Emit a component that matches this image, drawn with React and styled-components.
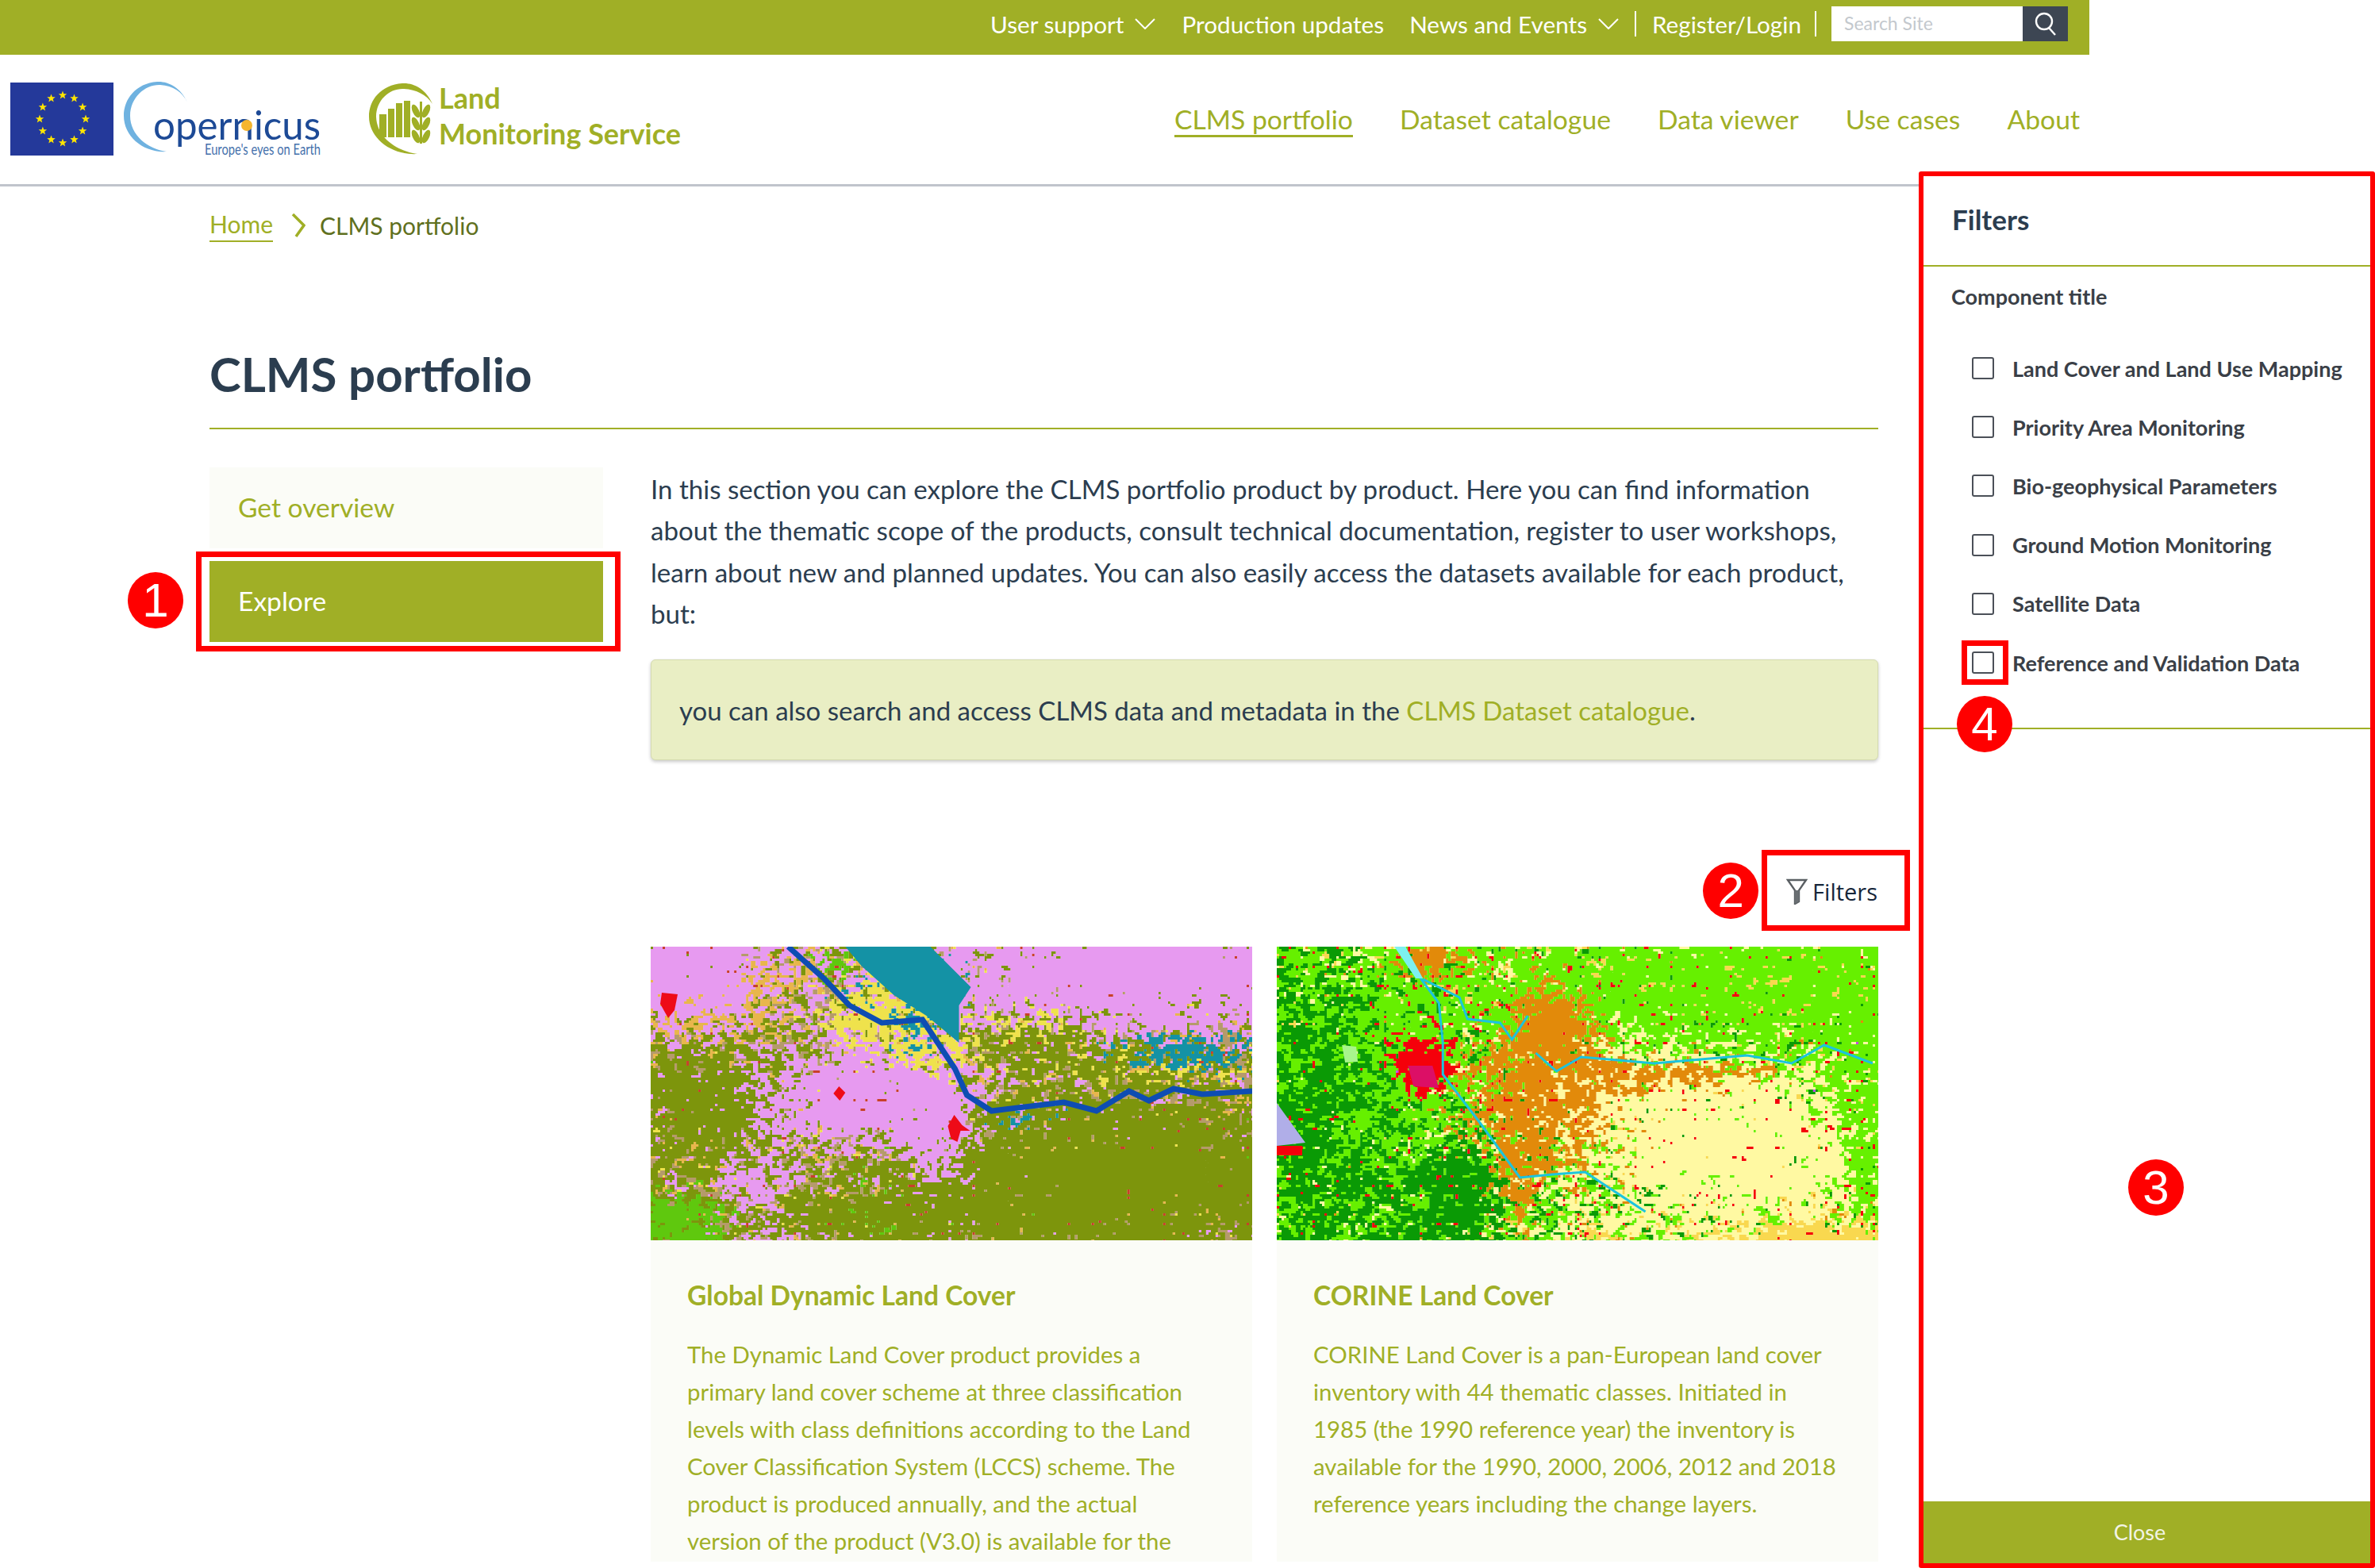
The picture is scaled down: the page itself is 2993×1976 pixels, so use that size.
import React, { useMemo } from "react";
import styled, { createGlobalStyle } from "styled-components";

const GREEN = "#a0af26";
const INK = "#2b3d4f";
const TINT = "#fbfcf7";

const GlobalStyle = createGlobalStyle`
  html, body {
    margin: 0;
    background: #fff;
    font-family: Lato, "Open Sans", sans-serif;
  }
  * { box-sizing: border-box; }
`;

const Page = styled.div`
  position: relative;
  width: 2993px;
  height: 1976px;
  overflow: hidden;
  background: #fff;
`;

const Site = styled.div`
  width: 2633px;
`;

const TopBar = styled.div`
  display: flex;
  align-items: center;
  justify-content: flex-end;
  height: 69px;
  padding: 0 27px 9px 0;
  background: ${GREEN};
  color: #fff;
  font-size: 29.7px;
`;

const TopLink = styled.span`
  margin-left: ${(p) => p.$ml || 0}px;
  white-space: nowrap;
`;

const TopChevron = styled.svg`
  width: 26px;
  height: 14px;
  margin-left: 14px;
  fill: none;
  stroke: #fff;
  stroke-width: 2;
`;

const TopDivider = styled.span`
  width: 2px;
  height: 32px;
  margin-left: ${(p) => p.$ml}px;
  background: #fff;
`;

const SearchBox = styled.div`
  display: flex;
  width: 298px;
  height: 44px;
  margin-left: 19px;
  background: #fff;
`;

const SearchInput = styled.div`
  flex: 1;
  padding-left: 16px;
  color: #c3c8cd;
  font-size: 23px;
  line-height: 42px;
`;

const SearchButton = styled.div`
  display: flex;
  align-items: center;
  justify-content: center;
  width: 57px;
  background: #3d4653;
`;

const Header = styled.header`
  display: flex;
  align-items: center;
  justify-content: space-between;
  height: 166px;
  padding: 0 12px 2px 13px;
  border-bottom: 3px solid #c0c4cc;
`;

const Logos = styled.div`
  display: flex;
  align-items: center;
`;

const Flag = styled.svg`
  width: 130px;
  height: 92px;
`;

const CopernicusLogo = styled.svg`
  width: 255px;
  height: 100px;
  margin-left: 13px;
  overflow: visible;
`;

const LandIcon = styled.svg`
  width: 82px;
  height: 92px;
  margin-left: 54px;
`;

const LandName = styled.div`
  margin: 0 0 7px 6px;
  color: ${GREEN};
  font-size: 36px;
  font-weight: 700;
  line-height: 45px;
`;

const Nav = styled.nav`
  display: flex;
  gap: 59px;
`;

const NavLink = styled.a`
  padding-top: 4px;
  border-bottom: 3px solid ${(p) => (p.$active ? GREEN : "transparent")};
  color: ${GREEN};
  font-size: 33.7px;
  line-height: 40px;
`;

const Main = styled.main`
  padding: 0 266px 0 264px;
`;

const Crumbs = styled.div`
  display: flex;
  align-items: center;
  height: 40px;
  margin-top: 29px;
  color: #5f7020;
  font-size: 30px;
`;

const CrumbLink = styled.a`
  padding-bottom: 2px;
  border-bottom: 2px solid ${GREEN};
  color: ${GREEN};
  line-height: 38px;
`;

const CrumbChevron = styled.svg`
  width: 18px;
  height: 30px;
  margin: 0 18px 0 23px;
  fill: none;
  stroke: ${GREEN};
  stroke-width: 3.5;
`;

const PageTitle = styled.h1`
  margin: 133px 0 0;
  padding-bottom: 34px;
  border-bottom: 2px solid ${GREEN};
  color: ${INK};
  font-size: 60px;
  font-weight: 700;
  line-height: 68px;
`;

const Columns = styled.div`
  display: grid;
  grid-template-columns: 496px 1547px;
  column-gap: 60px;
  margin-top: 48px;
`;

const SideMenu = styled.div`
  display: flex;
  flex-direction: column;
  gap: 16px;
`;

const SideItem = styled.div`
  position: relative;
  height: 102px;
  padding-left: 36px;
  background: ${(p) => (p.$active ? GREEN : TINT)};
  color: ${(p) => (p.$active ? "#fff" : GREEN)};
  font-size: 33.6px;
  line-height: 100px;
`;

const Content = styled.div`
  padding-top: 1px;
`;

const Intro = styled.p`
  max-width: 1520px;
  margin: 0;
  color: ${INK};
  font-size: 33.1px;
  line-height: 52.4px;
`;

const Callout = styled.div`
  height: 127px;
  margin-top: 31px;
  padding-left: 35px;
  border: 1px solid #d5dbb0;
  border-radius: 6px;
  background: #e9eec4;
  box-shadow: 0 2px 4px rgba(0, 0, 0, 0.22);
  color: ${INK};
  font-size: 33px;
  line-height: 127px;
`;

const CalloutLink = styled.a`
  color: ${GREEN};
`;

const FilterRow = styled.div`
  display: flex;
  justify-content: flex-end;
  margin-top: 146px;
`;

const FilterButton = styled.div`
  position: relative;
  display: flex;
  align-items: center;
  gap: 6px;
  height: 40px;
  margin-right: 1px;
  color: #16263a;
  font-family: "Open Sans", sans-serif;
  font-size: 29px;
`;

const FunnelIcon = styled.svg`
  width: 27px;
  height: 33px;
`;

const Cards = styled.div`
  display: grid;
  grid-template-columns: 758px 758px;
  column-gap: 31px;
  margin-top: 49px;
`;

const Card = styled.article`
  background: ${TINT};
`;

const MapFrame = styled.svg`
  display: block;
  width: 100%;
  height: 370px;
  filter: blur(0.6px);
`;

const CardBody = styled.div`
  height: 405px;
  padding: 49px 46px 0;
  overflow: hidden;
  color: ${GREEN};
`;

const CardTitle = styled.h3`
  margin: 0 0 31px;
  font-size: 33.6px;
  font-weight: 700;
  line-height: 40px;
`;

const CardText = styled.p`
  margin: 0;
  font-size: 29.4px;
  line-height: 47.1px;
`;

const Drawer = styled.aside`
  position: absolute;
  top: 216px;
  left: 2418px;
  display: flex;
  flex-direction: column;
  width: 575px;
  height: 1760px;
  border: 6px solid #f00;
  border-radius: 3px;
  background: #fff;
`;

const DrawerHead = styled.div`
  height: 114px;
  padding-left: 36px;
  border-bottom: 2px solid ${GREEN};
  color: ${INK};
  font-size: 35px;
  font-weight: 700;
  line-height: 108px;
`;

const FilterGroup = styled.div`
  padding: 22px 0 45px 35px;
  border-bottom: 2px solid ${GREEN};
`;

const GroupTitle = styled.div`
  margin-bottom: 37px;
  color: #3a3f47;
  font-size: 27px;
  font-weight: 700;
  line-height: 32px;
`;

const FilterOption = styled.label`
  display: flex;
  align-items: center;
  gap: 23px;
  height: 74.2px;
  padding-left: 26px;
  color: #3a3f47;
  font-size: 27px;
  font-weight: 700;
  white-space: nowrap;
`;

const Checkbox = styled.span`
  position: relative;
  flex: none;
  width: 28px;
  height: 28px;
  border: 2px solid #4b5058;
  border-radius: 3px;
  background: #fff;
`;

const DrawerSpace = styled.div`
  position: relative;
  flex: 1;
`;

const CloseBar = styled.div`
  height: 78px;
  padding-right: 18px;
  background: ${GREEN};
  color: #f2f4e4;
  font-size: 27px;
  line-height: 78px;
  text-align: center;
`;

const Ring = styled.span`
  position: absolute;
  top: ${(p) => p.$t}px;
  right: ${(p) => p.$r}px;
  bottom: ${(p) => p.$b}px;
  left: ${(p) => p.$l}px;
  border: 7px solid #f00;
  pointer-events: none;
`;

const Badge = styled.span`
  position: absolute;
  top: ${(p) => p.$t}px;
  left: ${(p) => p.$l}px;
  width: 70px;
  height: 71px;
  border-radius: 50%;
  background: #f00;
  color: #fff;
  font-family: "Liberation Sans", Arial, sans-serif;
  font-size: 60px;
  font-weight: 400;
  line-height: 71px;
  text-align: center;
`;

// small seeded noise so the two land cover maps keep the same speckle on each load
const hash = (x, y, s) => {
  const v = Math.sin(x * 127.1 + y * 311.7 + s * 74.7) * 43758.5453;
  return v - Math.floor(v);
};

const smooth = (x, y, s) => {
  const ix = Math.floor(x);
  const iy = Math.floor(y);
  const fx = x - ix;
  const fy = y - iy;
  const a = hash(ix, iy, s) * (1 - fx) + hash(ix + 1, iy, s) * fx;
  const b = hash(ix, iy + 1, s) * (1 - fx) + hash(ix + 1, iy + 1, s) * fx;
  return a * (1 - fy) + b * fy;
};

const buildCover = (layers, amp, speck) => {
  const cell = 3;
  const paths = {};
  for (let y = 0; y < 372; y += cell) {
    for (let x = 0; x < 760; x += cell) {
      let best = layers[0].c;
      let top = -99;
      layers.forEach((l, i) => {
        let score = l.base;
        l.blobs.forEach(([cx, cy, rx, ry, w]) => {
          const dx = (x - cx) / rx;
          const dy = (y - cy) / ry;
          score += w * Math.exp(-(dx * dx + dy * dy));
        });
        score += amp * (0.25 * smooth(x / 22, y / 14, i + 1) + 0.75 * smooth(x / 5, y / 4, i + 21));
        if (score > top) {
          top = score;
          best = l.c;
        }
      });
      if (smooth(x / 5, y / 4, 97) > speck.t) best = speck.c;
      paths[best] = (paths[best] || "") + `M${x} ${y}h${cell}v${cell}h-${cell}z`;
    }
  }
  return Object.entries(paths);
};

const DYNAMIC_LAYERS = [
  { c: "#e79af0", base: 0.1, blobs: [[617, 30, 290, 75, 1.6], [56, 30, 95, 75, 1.6], [260, 187, 140, 60, 1.5], [130, 300, 55, 55, 0.8], [360, 255, 45, 80, 1.0]] },
  { c: "#7d950c", base: 0.4, blobs: [[590, 290, 260, 90, 1.1], [70, 190, 80, 80, 0.9], [490, 130, 120, 35, 0.5], [300, 340, 200, 40, 0.5]] },
  { c: "#efe24c", base: -0.1, blobs: [[285, 87, 70, 55, 1.2], [490, 87, 70, 30, 0.8], [620, 150, 200, 25, 0.6], [360, 140, 60, 40, 0.9]] },
  { c: "#e8b64c", base: 0.1, blobs: [[80, 87, 80, 40, 0.9], [130, 40, 50, 30, 0.6]] },
  { c: "#1492a5", base: -0.6, blobs: [[668, 130, 130, 32, 1.6], [465, 220, 70, 22, 1.1], [340, 130, 40, 40, 0.9], [330, 50, 95, 70, 1.4]] },
  { c: "#5fc80e", base: -0.3, blobs: [[30, 347, 70, 40, 1.8], [285, 337, 50, 40, 1.0], [500, 320, 30, 30, 0.4], [230, 25, 25, 25, 1.2]] },
  { c: "#b59a6b", base: 0.25, blobs: [] },
];

const CORINE_LAYERS = [
  { c: "#0a9a05", base: 0, blobs: [[60, 220, 110, 190, 1.3], [225, 310, 60, 70, 1.1]] },
  { c: "#66f000", base: 0.15, blobs: [[610, 50, 350, 75, 1.1], [735, 220, 45, 120, 0.9], [100, 200, 140, 170, 0.9]] },
  { c: "#fff9a2", base: 0.05, blobs: [[576, 254, 175, 100, 1.35], [400, 170, 120, 60, 0.5], [100, 230, 70, 60, 0.4]] },
  { c: "#e28a0a", base: -0.3, blobs: [[340, 190, 130, 90, 1.4], [347, 87, 50, 50, 1.6], [525, 160, 100, 20, 1.2], [194, 14, 50, 25, 1.4], [300, 300, 30, 50, 1.0]] },
  { c: "#f9d84f", base: -0.1, blobs: [[640, 50, 120, 40, 0.8], [653, 360, 100, 20, 1.4], [430, 30, 80, 30, 0.5]] },
  { c: "#f5000a", base: -0.5, blobs: [[178, 147, 40, 40, 2.6], [240, 60, 100, 40, 0.7], [300, 150, 130, 50, 0.4]] },
  { c: "#c24be8", base: -0.7, blobs: [[170, 130, 40, 50, 0.8]] },
];

const DynamicMap = () => {
  const cover = useMemo(() => buildCover(DYNAMIC_LAYERS, 2, { t: 0.95, c: "#c8402a" }), []);
  return (
    <MapFrame viewBox="0 0 757 370" preserveAspectRatio="none">
      {cover.map(([fill, d]) => <path key={fill} d={d} fill={fill} />)}
      <polygon points="245,0 352,0 403,51 388,74 388,121 347,87 306,61 265,24" fill="#1492a5" />
      <polyline points="173,0 219,41 250,74 291,96 342,92 383,154 398,187 429,207 520,196 561,207 602,182 627,194 658,179 694,186 757,182" fill="none" stroke="#0e4db3" strokeWidth="7" />
      <polygon points="14,58 34,60 30,80 22,90 12,72" fill="#ee0b18" />
      <polygon points="237,176 245,184 238,194 230,185" fill="#ee0b18" />
      <polygon points="382,212 392,225 402,232 390,232 386,246 378,242 374,226" fill="#ee0b18" />
    </MapFrame>
  );
};

const CorineMap = () => {
  const cover = useMemo(() => buildCover(CORINE_LAYERS, 2.2, { t: 0.9, c: "#f5000a" }), []);
  return (
    <MapFrame viewBox="0 0 757 370" preserveAspectRatio="none">
      {cover.map(([fill, d]) => <path key={fill} d={d} fill={fill} />)}
      <polygon points="0,197 36,247 0,251" fill="#b0aee8" />
      <rect x="0" y="251" width="32" height="12" fill="#f5000a" />
      <polygon points="82,124 100,126 102,145 86,146" fill="#a8f58c" />
      <polygon points="165,150 196,150 204,178 172,176" fill="#dc0f66" />
      <g fill="none" stroke="#1cc4de" strokeWidth="3">
        <polyline points="153,0 184,44 204,71 209,121 209,161 255,221 306,291 347,287 388,284 464,334" />
        <polyline points="184,41 230,64 240,91 281,96 296,117 316,87" />
        <polyline points="326,134 352,157 383,139 475,147 592,137 648,147 689,124 750,147" />
      </g>
      <polygon points="148,0 162,0 184,40 175,40" fill="#7df0f0" />
    </MapFrame>
  );
};

const Star = ({ cx, cy, r }) => {
  const points = Array.from({ length: 10 }, (_, i) => {
    const a = -Math.PI / 2 + (i * Math.PI) / 5;
    const d = i % 2 ? r * 0.42 : r;
    return `${(cx + d * Math.cos(a)).toFixed(2)},${(cy + d * Math.sin(a)).toFixed(2)}`;
  }).join(" ");
  return <polygon points={points} fill="#ffe500" />;
};

const EuFlag = () => (
  <Flag viewBox="0 0 130 92">
    <rect width="130" height="92" fill="#24399a" />
    {Array.from({ length: 12 }, (_, i) => {
      const a = (i * Math.PI) / 6;
      return <Star key={i} cx={66 + 29 * Math.cos(a)} cy={46 + 30 * Math.sin(a)} r={5.5} />;
    })}
  </Flag>
);

const Copernicus = () => (
  <CopernicusLogo viewBox="0 0 255 100">
    <path d="M80 29 C72 10 55 2 42 3 C15 5 0 25 0 46 C0 72 25 93 54 91 C30 88 8 70 8 46 C8 22 28 6 46 7 C62 8 74 16 80 29 Z" fill="#6fb2e0" />
    <text x="37" y="76" fontFamily="Lato, sans-serif" fontSize="50" fill="#1d4a96" textLength="211" lengthAdjust="spacingAndGlyphs">opernicus</text>
    <circle cx="155" cy="58" r="7" fill="#f5b52e" />
    <text x="102" y="95" fontFamily="Lato, sans-serif" fontSize="19" fill="#4470ab" textLength="146" lengthAdjust="spacingAndGlyphs">Europe's eyes on Earth</text>
  </CopernicusLogo>
);

const LandMark = () => (
  <LandIcon viewBox="0 0 82 92">
    <path d="M80 27 C72 8 56 0 42 1 C15 3 0 22 0 43 C0 70 28 92 61 90 C35 86 10 70 9 43 C9 22 26 7 44 8 C60 9 72 15 80 27 Z" fill={GREEN} />
    <g fill={GREEN}>
      <rect x="13" y="40" width="9" height="29" />
      <rect x="24" y="33" width="8" height="36" />
      <rect x="34" y="26" width="8" height="43" />
      <rect x="44" y="23" width="8" height="46" />
      <rect x="64" y="24" width="3" height="53" />
      <ellipse cx="59" cy="36" rx="4" ry="9" transform="rotate(-25 59 36)" />
      <ellipse cx="72" cy="36" rx="4" ry="9" transform="rotate(25 72 36)" />
      <ellipse cx="59" cy="52" rx="4" ry="9" transform="rotate(-25 59 52)" />
      <ellipse cx="72" cy="52" rx="4" ry="9" transform="rotate(25 72 52)" />
      <ellipse cx="59" cy="68" rx="4" ry="9" transform="rotate(-25 59 68)" />
      <ellipse cx="72" cy="68" rx="4" ry="9" transform="rotate(25 72 68)" />
    </g>
  </LandIcon>
);

const Chevron = () => (
  <TopChevron viewBox="0 0 26 14">
    <polyline points="1,1 13,13 25,1" />
  </TopChevron>
);

const FILTER_OPTIONS = [
  "Land Cover and Land Use Mapping",
  "Priority Area Monitoring",
  "Bio-geophysical Parameters",
  "Ground Motion Monitoring",
  "Satellite Data",
];

export default function App() {
  return (
    <Page>
      <GlobalStyle />
      <Site>
        <TopBar>
          <TopLink>User support</TopLink>
          <Chevron />
          <TopLink $ml={33}>Production updates</TopLink>
          <TopLink $ml={32}>News and Events</TopLink>
          <Chevron />
          <TopDivider $ml={20} />
          <TopLink $ml={20}>Register/Login</TopLink>
          <TopDivider $ml={17} />
          <SearchBox>
            <SearchInput>Search Site</SearchInput>
            <SearchButton>
              <svg width="30" height="32" viewBox="0 0 30 32" fill="none" stroke="#fff" strokeWidth="2.4">
                <circle cx="13" cy="13" r="10" />
                <line x1="19" y1="21" x2="27" y2="30" />
              </svg>
            </SearchButton>
          </SearchBox>
        </TopBar>

        <Header>
          <Logos>
            <EuFlag />
            <Copernicus />
            <LandMark />
            <LandName>
              Land
              <br />
              Monitoring Service
            </LandName>
          </Logos>
          <Nav>
            <NavLink $active>CLMS portfolio</NavLink>
            <NavLink>Dataset catalogue</NavLink>
            <NavLink>Data viewer</NavLink>
            <NavLink>Use cases</NavLink>
            <NavLink>About</NavLink>
          </Nav>
        </Header>

        <Main>
          <Crumbs>
            <CrumbLink>Home</CrumbLink>
            <CrumbChevron viewBox="0 0 18 30">
              <polyline points="2,1 16,15 6,29" />
            </CrumbChevron>
            CLMS portfolio
          </Crumbs>

          <PageTitle>CLMS portfolio</PageTitle>

          <Columns>
            <SideMenu>
              <SideItem>Get overview</SideItem>
              <SideItem $active>
                Explore
                <Ring $t={-12} $r={-22} $b={-12} $l={-17} />
                <Badge $t={14} $l={-103}>1</Badge>
              </SideItem>
            </SideMenu>

            <Content>
              <Intro>
                In this section you can explore the CLMS portfolio product by product. Here you can find information
                about the thematic scope of the products, consult technical documentation, register to user workshops,
                learn about new and planned updates. You can also easily access the datasets available for each product,
                but:
              </Intro>
              <Callout>
                you can also search and access CLMS data and metadata in the <CalloutLink>CLMS Dataset catalogue</CalloutLink>.
              </Callout>

              <FilterRow>
                <FilterButton>
                  <FunnelIcon viewBox="0 0 27 33">
                    <path d="M2 2 H25 L16 15 V29 L11 32 V15 Z" fill="none" stroke="#5a5f63" strokeWidth="2.4" />
                    <path d="M11 15 H16 V29 L11 32 Z" fill="#6a6f73" />
                  </FunnelIcon>
                  Filters
                  <Ring $t={-33} $r={-41} $b={-29} $l={-31} />
                  <Badge $t={-17} $l={-105}>2</Badge>
                </FilterButton>
              </FilterRow>

              <Cards>
                <Card>
                  <DynamicMap />
                  <CardBody>
                    <CardTitle>Global Dynamic Land Cover</CardTitle>
                    <CardText>
                      The Dynamic Land Cover product provides a primary land cover scheme at three classification levels
                      with class definitions according to the Land Cover Classification System (LCCS) scheme. The product
                      is produced annually, and the actual version of the product (V3.0) is available for the
                    </CardText>
                  </CardBody>
                </Card>
                <Card>
                  <CorineMap />
                  <CardBody>
                    <CardTitle>CORINE Land Cover</CardTitle>
                    <CardText>
                      CORINE Land Cover is a pan-European land cover inventory with 44 thematic classes. Initiated in
                      1985 (the 1990 reference year) the inventory is available for the 1990, 2000, 2006, 2012 and 2018
                      reference years including the change layers.
                    </CardText>
                  </CardBody>
                </Card>
              </Cards>
            </Content>
          </Columns>
        </Main>
      </Site>

      <Drawer>
        <DrawerHead>Filters</DrawerHead>
        <FilterGroup>
          <GroupTitle>Component title</GroupTitle>
          {FILTER_OPTIONS.map((name) => (
            <FilterOption key={name}>
              <Checkbox />
              {name}
            </FilterOption>
          ))}
          <FilterOption>
            <Checkbox>
              <Ring $t={-16} $r={-20} $b={-16} $l={-15} />
              <Badge $t={54} $l={-21}>4</Badge>
            </Checkbox>
            Reference and Validation Data
          </FilterOption>
        </FilterGroup>
        <DrawerSpace>
          <Badge $t={542} $l={258}>3</Badge>
        </DrawerSpace>
        <CloseBar>Close</CloseBar>
      </Drawer>
    </Page>
  );
}
